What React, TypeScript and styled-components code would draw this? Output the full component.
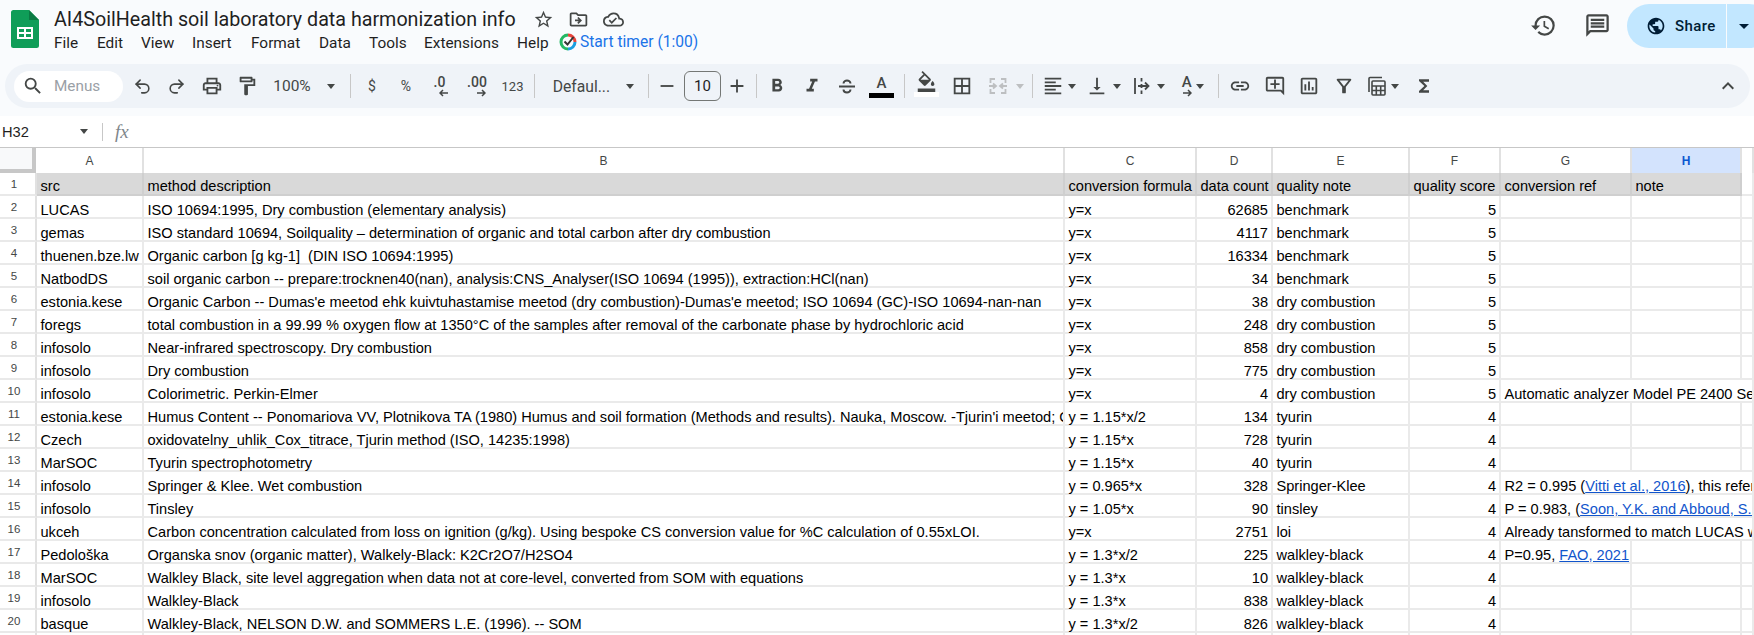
import React from 'react';
import styled, { createGlobalStyle } from 'styled-components';
import {
  MdStarBorder, MdOutlineDriveFileMove, MdOutlineCloudDone, MdSearch, MdOutlinePrint, MdOutlineFormatPaint,
  MdArrowDropDown, MdRemove, MdAdd, MdFormatBold, MdFormatItalic, MdOutlineBorderAll,
  MdFormatColorFill, MdFormatAlignLeft, MdVerticalAlignBottom, MdOutlineInsertLink, MdOutlineAddComment,
  MdOutlineInsertChart, MdOutlineFilterAlt, MdFunctions, MdKeyboardArrowUp, MdHistory, MdOutlineMessage, MdPublic,
} from 'react-icons/md';
import { Undo2, Redo2 } from 'lucide-react';

const GlobalStyle = createGlobalStyle`
  html, body { margin: 0; padding: 0; height: 635px; overflow: hidden; background: #f9fbfd; }
  body { font-family: "Liberation Sans", Arial, sans-serif; }
`;

const COLS = '37px 107px 921px 132px 76px 137px 91px 131px 110px 12px';

const Page = styled.div`
  width: 1754px;
  height: 635px;
  overflow: hidden;
  display: flex;
  flex-direction: column;
`;

const TitleBar = styled.header`
  height: 64px;
  display: flex;
  flex: none;
`;

const Logo = styled.svg`
  width: 28px;
  height: 38px;
  margin: 10px 15px 0 11px;
  flex: none;
`;

const TitleBlock = styled.div`
  display: flex;
  flex-direction: column;
  flex: 1;
`;

const TitleRow = styled.div`
  display: flex;
  align-items: center;
  height: 25px;
  margin-top: 7px;
  color: #444746;
`;

const DocTitle = styled.div`
  font-family: Roboto, sans-serif;
  font-size: 19.7px;
  color: #1f1f1f;
  width: 472px;
  white-space: nowrap;
`;

const TitleIcon = styled.span`
  width: 35px;
  display: flex;
  justify-content: center;
  font-size: 21px;
`;

const MenuRow = styled.nav`
  display: flex;
  align-items: center;
  height: 25px;
  margin-top: -2px;
  font-family: Roboto, sans-serif;
  font-size: 15.4px;
  color: #1f1f1f;
`;

const MenuItem = styled.span<{ $w: number }>`
  width: ${(p) => p.$w}px;
  flex: none;
`;

const Timer = styled.span`
  display: flex;
  align-items: center;
  gap: 3px;
  color: #1a73e8;
  font-size: 15.6px;
  margin-top: -2px;
`;

const RightTools = styled.div`
  display: flex;
  align-items: center;
  height: 44px;
  margin-top: 4px;
  color: #444746;
`;

const HeadIcon = styled.span`
  width: 54px;
  display: flex;
  justify-content: center;
  font-size: 27px;
  margin-top: -1px;
`;

const SharePill = styled.div`
  width: 144px;
  height: 44px;
  margin: 0 -17px 0 3px;
  background: #c2e7ff;
  border-radius: 22px;
  display: flex;
  align-items: center;
  color: #001d35;
  font-family: Roboto, sans-serif;
  font-weight: 500;
  letter-spacing: 0.4px;
`;

const ShareMain = styled.div`
  width: 100px;
  height: 44px;
  display: flex;
  align-items: center;
  gap: 9px;
  padding-left: 19px;
  box-sizing: border-box;
  border-right: 1px solid #f9fbfd;
  font-size: 15px;
  svg { font-size: 20px; }
`;

const ShareArrow = styled.span`
  display: flex;
  font-size: 24px;
  margin-left: 5px;
`;

const Toolbar = styled.div`
  height: 44px;
  margin: 0 4px 8px 5px;
  flex: none;
  background: #eff3f8;
  border-radius: 22px;
  padding-left: 9px;
  display: flex;
  align-items: center;
  color: #444746;
  font-family: Roboto, sans-serif;
`;

const SearchPill = styled.div`
  width: 109px;
  height: 31px;
  margin-right: 2px;
  background: #fff;
  border-radius: 16px;
  display: flex;
  align-items: center;
  padding-left: 8px;
  box-sizing: border-box;
  gap: 10px;
  color: #9aa0a6;
  font-size: 15.3px;
  flex: none;
  svg { font-size: 22px; color: #444746; }
`;

const Tool = styled.span<{ $w: number; $muted?: boolean; $size?: number }>`
  width: ${(p) => p.$w}px;
  height: 30px;
  flex: none;
  display: flex;
  align-items: center;
  justify-content: center;
  font-size: ${(p) => p.$size ?? 22}px;
  color: ${(p) => (p.$muted ? '#bdbfc1' : '#444746')};
`;

const ToolText = styled(Tool)`
  font-size: ${(p) => p.$size ?? 15}px;
`;

const Divider = styled.span<{ $l: number; $r: number }>`
  width: 1px;
  height: 24px;
  background: #c7c7c7;
  flex: none;
  margin: 0 ${(p) => p.$r}px 0 ${(p) => p.$l}px;
`;

const Caret = styled.span<{ $gap?: number }>`
  width: 0;
  height: 0;
  border-left: 4.5px solid transparent;
  border-right: 4.5px solid transparent;
  border-top: 5px solid currentColor;
  margin-left: ${(p) => p.$gap ?? 4.5}px;
  flex: none;
`;

const Decimal = styled.span`
  display: flex;
  flex-direction: column;
  align-items: center;
  font-size: 14px;
  font-weight: 500;
  line-height: 13px;
  svg { display: block; margin-left: 8px; }
`;

const SizeBox = styled.span`
  width: 35px;
  height: 28px;
  border: 1px solid #747775;
  border-radius: 6px;
  display: flex;
  align-items: center;
  justify-content: center;
  font-size: 15px;
  flex: none;
  margin: 0 4px 0 5px;
  color: #1f1f1f;
`;

const ColorA = styled.span<{ $bar: string }>`
  display: flex;
  flex-direction: column;
  align-items: center;
  width: 25px;
  font-size: 15px;
  font-weight: 500;
  line-height: 16px;
  &::after {
    content: '';
    width: 25px;
    height: 5px;
    background: ${(p) => p.$bar};
    margin-top: 2px;
  }
`;

const FillIcon = styled.span`
  display: flex;
  flex-direction: column;
  align-items: center;
  width: 25px;
  svg { font-size: 21px; margin-top: -5px; }
  &::after {
    content: '';
    width: 25px;
    height: 5px;
    background: #fff;
  }
`;

const RotateA = styled.span`
  display: flex;
  flex-direction: column;
  align-items: center;
  font-size: 15px;
  font-weight: 500;
  line-height: 14px;
  svg { display: block; }
`;

const Collapse = styled.span`
  margin-left: auto;
  margin-right: 10px;
  font-size: 24px;
  display: flex;
`;

const FormulaBar = styled.div`
  height: 32px;
  flex: none;
  background: #fff;
  display: flex;
  align-items: center;
  font-size: 14.67px;
  color: #1f1f1f;
  border-bottom: 1px solid #c7c7c7;
  box-sizing: border-box;
`;

const NameBox = styled.span`
  width: 80px;
  padding-left: 2px;
  box-sizing: border-box;
`;

const NameArrow = styled.span`
  width: 0;
  height: 0;
  border-left: 4.5px solid transparent;
  border-right: 4.5px solid transparent;
  border-top: 5px solid #444746;
  margin-right: 14px;
`;

const FxDivider = styled.span`
  width: 1px;
  height: 18px;
  background: #c7c7c7;
  margin-right: 12px;
`;

const Fx = styled.span`
  font-family: "Liberation Serif", serif;
  font-style: italic;
  font-size: 19px;
  color: #80868b;
`;

const Sheet = styled.div`
  flex: 1;
  background: #fff;
  overflow: hidden;
`;

const Row = styled.div<{ $h: number }>`
  display: grid;
  grid-template-columns: ${COLS};
  height: ${(p) => p.$h}px;
  width: 1754px;
`;

const Corner = styled.div`
  background: #f8f9fa;
  border-right: 4px solid #c7c7c7;
  border-bottom: 4px solid #c7c7c7;
  margin-right: 1px;
  box-sizing: border-box;
`;

const ColHead = styled.div<{ $active?: boolean }>`
  display: flex;
  align-items: center;
  justify-content: center;
  box-sizing: border-box;
  background: ${(p) => (p.$active ? '#d3e3fd' : '#fff')};
  color: ${(p) => (p.$active ? '#0b57d0' : '#444746')};
  font-weight: ${(p) => (p.$active ? 700 : 400)};
  font-size: 12px;
  border-right: 2px solid #e1e1e1;
`;

const RowHead = styled.div`
  display: flex;
  align-items: center;
  justify-content: center;
  padding: 1px 7px 0 0;
  box-sizing: border-box;
  background: #fff;
  color: #444746;
  font-size: 11.5px;
  border-right: 2px solid #e1e1e1;
  border-bottom: 2px solid #e9e9e9;
`;

const Cell = styled.div<{ $num?: boolean; $span?: number; $head?: boolean }>`
  grid-column: span ${(p) => p.$span ?? 1};
  box-sizing: border-box;
  padding: ${(p) => (p.$head ? 2 : 4)}px ${(p) => (p.$num ? 3 : 0)}px 0 3.5px;
  display: flex;
  align-items: center;
  justify-content: ${(p) => (p.$num ? 'flex-end' : 'flex-start')};
  background: ${(p) => (p.$head ? '#d9d9d9' : '#fff')};
  color: #000;
  font-size: 14.6px;
  white-space: pre;
  overflow: hidden;
  border-right: 2px solid ${(p) => (p.$head ? '#cfcfcf' : '#eaeaea')};
  box-shadow: inset 0 -2px 0 ${(p) => (p.$head ? '#cfcfcf' : '#eaeaea')};
`;

const SheetLink = styled.a`
  color: #1155cc;
  text-decoration: underline;
`;

type Rec = [string, string, string, string, string, string, React.ReactNode?];

const DATA: Rec[] = [
  ['LUCAS', 'ISO 10694:1995, Dry combustion (elementary analysis)', 'y=x', '62685', 'benchmark', '5'],
  ['gemas', 'ISO standard 10694, Soilquality – determination of organic and total carbon after dry combustion', 'y=x', '4117', 'benchmark', '5'],
  ['thuenen.bze.lw', 'Organic carbon [g kg-1]  (DIN ISO 10694:1995)', 'y=x', '16334', 'benchmark', '5'],
  ['NatbodDS', 'soil organic carbon -- prepare:trocknen40(nan), analysis:CNS_Analyser(ISO 10694 (1995)), extraction:HCl(nan)', 'y=x', '34', 'benchmark', '5'],
  ['estonia.kese', "Organic Carbon -- Dumas'e meetod ehk kuivtuhastamise meetod (dry combustion)-Dumas'e meetod; ISO 10694 (GC)-ISO 10694-nan-nan", 'y=x', '38', 'dry combustion', '5'],
  ['foregs', 'total combustion in a 99.99 % oxygen flow at 1350°C of the samples after removal of the carbonate phase by hydrochloric acid', 'y=x', '248', 'dry combustion', '5'],
  ['infosolo', 'Near-infrared spectroscopy. Dry combustion', 'y=x', '858', 'dry combustion', '5'],
  ['infosolo', 'Dry combustion', 'y=x', '775', 'dry combustion', '5'],
  ['infosolo', 'Colorimetric. Perkin-Elmer', 'y=x', '4', 'dry combustion', '5', 'Automatic analyzer Model PE 2400 Series'],
  ['estonia.kese', "Humus Content -- Ponomariova VV, Plotnikova TA (1980) Humus and soil formation (Methods and results). Nauka, Moscow. -Tjurin'i meetod; GOST", 'y = 1.15*x/2', '134', 'tyurin', '4'],
  ['Czech', 'oxidovatelny_uhlik_Cox_titrace, Tjurin method (ISO, 14235:1998)', 'y = 1.15*x', '728', 'tyurin', '4'],
  ['MarSOC', 'Tyurin spectrophotometry', 'y = 1.15*x', '40', 'tyurin', '4'],
  ['infosolo', 'Springer & Klee. Wet combustion', 'y = 0.965*x', '328', 'Springer-Klee', '4', <>R2 = 0.995 (<SheetLink>Vitti et al., 2016</SheetLink>), this reference</>],
  ['infosolo', 'Tinsley', 'y = 1.05*x', '90', 'tinsley', '4', <>P = 0.983, (<SheetLink>Soon, Y.K. and Abboud, S. 1991</SheetLink>)</>],
  ['ukceh', 'Carbon concentration calculated from loss on ignition (g/kg). Using bespoke CS conversion value for %C calculation of 0.55xLOI.', 'y=x', '2751', 'loi', '4', 'Already tansformed to match LUCAS with'],
  ['Pedološka', 'Organska snov (organic matter), Walkely-Black: K2Cr2O7/H2SO4', 'y = 1.3*x/2', '225', 'walkley-black', '4', <>P=0.95, <SheetLink>FAO, 2021</SheetLink></>],
  ['MarSOC', 'Walkley Black, site level aggregation when data not at core-level, converted from SOM with equations', 'y = 1.3*x', '10', 'walkley-black', '4'],
  ['infosolo', 'Walkley-Black', 'y = 1.3*x', '838', 'walkley-black', '4'],
  ['basque', 'Walkley-Black, NELSON D.W. and SOMMERS L.E. (1996). -- SOM', 'y = 1.3*x/2', '826', 'walkley-black', '4'],
  ['', '', '', '', '', ''],
];

const HEADS = ['src', 'method description', 'conversion formula', 'data count', 'quality note', 'quality score', 'conversion ref', 'note'];

function SheetsLogo() {
  return (
    <Logo viewBox="0 0 28 38">
      <path d="M18 0H2.500A2.500 2.500 0 0 0 0 2.500v33A2.500 2.500 0 0 0 2.500 38h23a2.500 2.500 0 0 0 2.500-2.500V10z" fill="#0f9d58" />
      <path d="M18 0l10 10h-10z" fill="#0a7a43" />
      <path d="M6 17h16v12H6z" fill="#fff" />
      <path d="M8 19h5v3H8zM15 19h5v3h-5zM8 24h5v3H8zM15 24h5v3h-5z" fill="#0f9d58" />
    </Logo>
  );
}

function TimerIcon() {
  return (
    <svg width="18" height="18" viewBox="0 0 18 18">
      <path d="M9 2a7 7 0 0 1 7 7" fill="none" stroke="#e8453c" strokeWidth="3" />
      <path d="M16 9a7 7 0 0 1-7 7" fill="none" stroke="#1a9fe0" strokeWidth="3" />
      <path d="M9 16a7 7 0 0 1-7-7 7 7 0 0 1 7-7" fill="none" stroke="#25b864" strokeWidth="3" />
      <path d="M5.500 8.500L8.500 11.500L14.500 4" fill="none" stroke="#333" strokeWidth="2" />
    </svg>
  );
}

function StrikeIcon() {
  return (
    <svg width="20" height="20" viewBox="0 0 20 20" fill="none" stroke="currentColor" strokeWidth="1.900">
      <path d="M6.500 7.500C6.500 3.500 13.500 3.500 13.500 7.500M2 10.500h16M6.500 13.500C6.500 17.500 13.500 17.500 13.500 13.500" />
    </svg>
  );
}

function TableIcon() {
  return (
    <svg width="22" height="22" viewBox="0 0 22 22" fill="none" stroke="currentColor" strokeWidth="1.600">
      <path d="M4 17V3.500a1 1 0 0 1 1-1h12" />
      <rect x="7" y="6" width="13" height="14" rx="1" />
      <path d="M7 11h13M7 15.500h13M11.300 11v9M15.700 11v9" />
    </svg>
  );
}

function MergeIcon() {
  return (
    <svg width="20" height="20" viewBox="0 0 20 20" fill="none" stroke="currentColor" strokeWidth="1.800">
      <path d="M7 3H2.500v4M2.500 13v4H7M13 3h4.500v4M17.500 13v4H13M1 10h6M19 10h-6M5 7.500L8 10l-3 2.500M15 7.500L12 10l3 2.500" />
    </svg>
  );
}

function WrapIcon() {
  return (
    <svg width="20" height="20" viewBox="0 0 20 20" fill="none" stroke="currentColor" strokeWidth="1.800">
      <path d="M3 2v16M9.500 2v3.500M9.500 8v4M9.500 14.500V18M6 10h10M13 6.500l3.500 3.500L13 13.500" />
    </svg>
  );
}

function SmallArrow({ flip }: { flip?: boolean }) {
  return (
    <svg width="10" height="8" viewBox="0 0 10 8" fill="none" stroke="currentColor" strokeWidth="1.500">
      <path d={flip ? 'M9 4H1M4 1L1 4l3 3' : 'M1 4h8M6 1l3 3-3 3'} />
    </svg>
  );
}

export default function App() {
  return (
    <Page>
      <GlobalStyle />
      <TitleBar>
        <SheetsLogo />
        <TitleBlock>
          <TitleRow>
            <DocTitle>AI4SoilHealth soil laboratory data harmonization info</DocTitle>
            <TitleIcon><MdStarBorder /></TitleIcon>
            <TitleIcon><MdOutlineDriveFileMove /></TitleIcon>
            <TitleIcon><MdOutlineCloudDone /></TitleIcon>
          </TitleRow>
          <MenuRow>
            <MenuItem $w={43}>File</MenuItem>
            <MenuItem $w={44}>Edit</MenuItem>
            <MenuItem $w={51}>View</MenuItem>
            <MenuItem $w={59}>Insert</MenuItem>
            <MenuItem $w={68}>Format</MenuItem>
            <MenuItem $w={50}>Data</MenuItem>
            <MenuItem $w={55}>Tools</MenuItem>
            <MenuItem $w={93}>Extensions</MenuItem>
            <MenuItem $w={42}>Help</MenuItem>
            <Timer><TimerIcon />Start timer (1:00)</Timer>
          </MenuRow>
        </TitleBlock>
        <RightTools>
          <HeadIcon><MdHistory /></HeadIcon>
          <HeadIcon><MdOutlineMessage /></HeadIcon>
          <SharePill>
            <ShareMain><MdPublic />Share</ShareMain>
            <ShareArrow><MdArrowDropDown /></ShareArrow>
          </SharePill>
        </RightTools>
      </TitleBar>

      <Toolbar>
        <SearchPill><MdSearch />Menus</SearchPill>
        <Tool $w={34}><Undo2 size={19} /></Tool>
        <Tool $w={35}><Redo2 size={19} /></Tool>
        <Tool $w={35}><MdOutlinePrint /></Tool>
        <Tool $w={35}><MdOutlineFormatPaint /></Tool>
        <ToolText $w={80} $size={15.5}>100%&nbsp;&nbsp;&nbsp;<Caret /></ToolText>
        <Divider $l={6} $r={4} />
        <ToolText $w={34} $size={14}>$</ToolText>
        <ToolText $w={34} $size={14}>%</ToolText>
        <Tool $w={33}><Decimal>.0<SmallArrow flip /></Decimal></Tool>
        <Tool $w={42}><Decimal>.00<SmallArrow /></Decimal></Tool>
        <ToolText $w={29} $size={13}>123</ToolText>
        <Divider $l={7} $r={8} />
        <ToolText $w={101} $size={15.7}>Defaul...&nbsp;&nbsp;&nbsp;<Caret /></ToolText>
        <Divider $l={4} $r={6} />
        <Tool $w={24}><MdRemove /></Tool>
        <SizeBox>10</SizeBox>
        <Tool $w={24}><MdAdd /></Tool>
        <Divider $l={7} $r={2} />
        <Tool $w={35} $size={22}><MdFormatBold /></Tool>
        <Tool $w={35} $size={22}><MdFormatItalic /></Tool>
        <Tool $w={35}><StrikeIcon /></Tool>
        <Tool $w={35}><ColorA $bar="#000">A</ColorA></Tool>
        <Divider $l={5} $r={4} />
        <Tool $w={35}><FillIcon><MdFormatColorFill /></FillIcon></Tool>
        <Tool $w={36}><MdOutlineBorderAll /></Tool>
        <Tool $w={52} $muted><MergeIcon /><Caret $gap={7.5} /></Tool>
        <Divider $l={0} $r={4} />
        <Tool $w={44}><MdFormatAlignLeft /><Caret /></Tool>
        <Tool $w={45}><MdVerticalAlignBottom /><Caret /></Tool>
        <Tool $w={45}><WrapIcon /><Caret /></Tool>
        <Tool $w={44}><RotateA>A<SmallArrow /></RotateA><Caret /></Tool>
        <Divider $l={3} $r={3} />
        <Tool $w={36}><MdOutlineInsertLink /></Tool>
        <Tool $w={33}><MdOutlineAddComment /></Tool>
        <Tool $w={35}><MdOutlineInsertChart /></Tool>
        <Tool $w={35}><MdOutlineFilterAlt /></Tool>
        <Tool $w={42}><TableIcon /><Caret /></Tool>
        <Tool $w={42} $size={20}><MdFunctions /></Tool>
        <Collapse><MdKeyboardArrowUp /></Collapse>
      </Toolbar>

      <FormulaBar>
        <NameBox>H32</NameBox>
        <NameArrow />
        <FxDivider />
        <Fx>fx</Fx>
      </FormulaBar>

      <Sheet>
        <Row $h={25}>
          <Corner />
          {['A', 'B', 'C', 'D', 'E', 'F', 'G', 'H'].map((c) => (
            <ColHead key={c} $active={c === 'H'}>{c}</ColHead>
          ))}
          <ColHead />
        </Row>
        <Row $h={23}>
          <RowHead>1</RowHead>
          {HEADS.map((h) => (
            <Cell key={h} $head>{h}</Cell>
          ))}
          <Cell />
        </Row>
        {DATA.map((r, i) => {
          const spill = r[6] && i !== 15;
          return (
            <Row $h={23} key={i}>
              <RowHead>{i + 2}</RowHead>
              <Cell>{r[0]}</Cell>
              <Cell>{r[1]}</Cell>
              <Cell>{r[2]}</Cell>
              <Cell $num>{r[3]}</Cell>
              <Cell>{r[4]}</Cell>
              <Cell $num>{r[5]}</Cell>
              <Cell $span={spill ? 3 : 1}>{r[6]}</Cell>
              {!spill && <Cell />}
              {!spill && <Cell />}
            </Row>
          );
        })}
      </Sheet>
    </Page>
  );
}
